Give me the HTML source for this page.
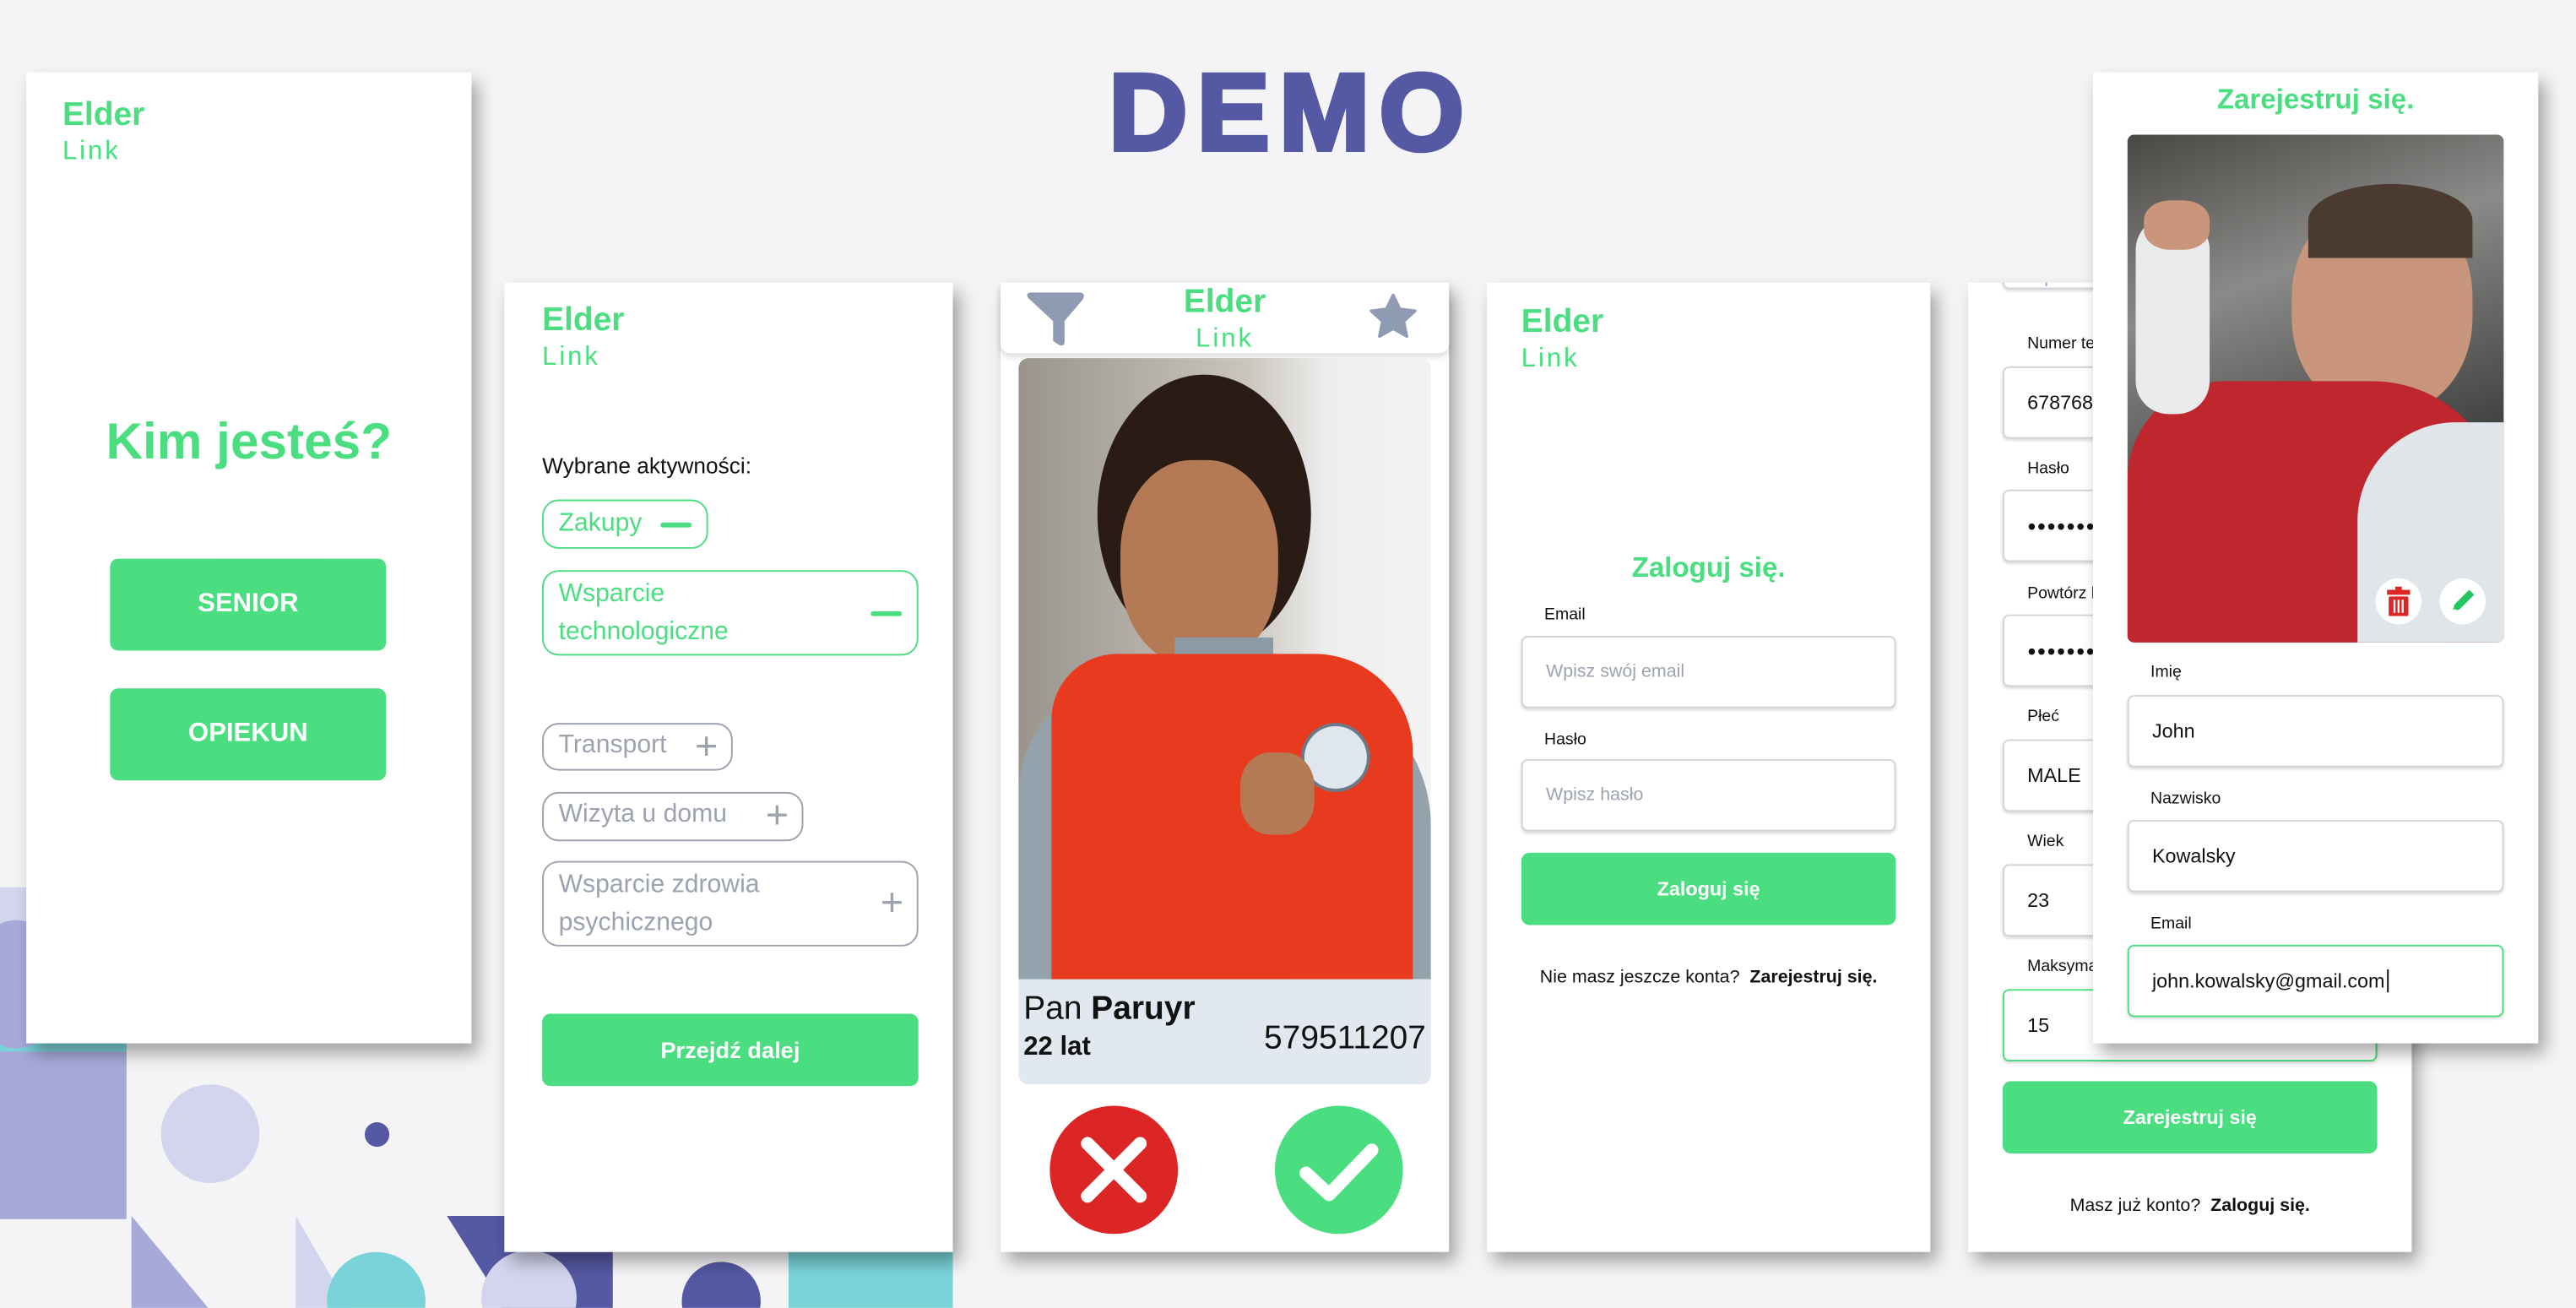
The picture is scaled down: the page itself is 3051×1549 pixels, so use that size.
<!DOCTYPE html>
<html><head><meta charset="utf-8">
<style>
*{margin:0;padding:0;box-sizing:border-box}
html,body{width:3051px;height:1549px;overflow:hidden;background:#f4f4f6}
#w{position:absolute;left:0;top:0;width:1568px;height:796px;transform:scale(1.94579);transform-origin:0 0;font-family:"Liberation Sans",sans-serif;background:#f4f4f6;overflow:hidden}
.a{position:absolute}
.card{position:absolute;background:#fff;box-shadow:4px 6px 10px rgba(0,0,0,.35)}
.g{color:#4ade80}
.el{position:absolute;font-weight:bold;font-size:20px;color:#4ade80;line-height:1}
.lk{position:absolute;font-size:16px;color:#4ade80;letter-spacing:1.5px;line-height:1}
.btn{position:absolute;background:#4ade80;border-radius:5px;color:#fff;font-weight:bold;display:flex;align-items:center;justify-content:center}
.lab{position:absolute;font-size:10px;color:#111}
.inp{position:absolute;border:1.5px solid #d1d5db;border-radius:4px;box-shadow:0 1px 2px rgba(0,0,0,.15);font-size:12px;color:#111;display:flex;align-items:center;padding-left:14px;background:#fff;overflow:hidden;white-space:nowrap}
.chip{position:absolute;border:1.5px solid #9ca3af;border-radius:10px;font-size:15.5px;color:#9ca3af;padding:5px 9px;line-height:23px}
.chip.on{border-color:#4ade80;color:#4ade80}
.ic{position:absolute;right:8px;top:50%;transform:translateY(-50%);font-size:24px;line-height:1}
.mn{position:absolute;right:9px;top:50%;width:19px;height:2.5px;margin-top:-1px;background:#4ade80;border-radius:2px}
.dots{font-size:9px;letter-spacing:0.5px}
</style></head><body><div id="w">

<div class="a" style="left:0;top:540px;width:40px;height:60px;background:#d3d5ee"></div>
<div class="a" style="left:0;top:565px;width:77px;height:77px;background:#7ad3d9"></div>
<div class="a" style="left:-20px;top:560px;width:60px;height:78px;border-radius:50%;background:#a7aad8"></div>
<div class="a" style="left:0;top:640px;width:77px;height:102px;background:#a7aad8"></div>
<div class="a" style="left:98px;top:660px;width:60px;height:60px;border-radius:50%;background:#d3d5ee"></div>
<div class="a" style="left:222px;top:683px;width:15px;height:15px;border-radius:50%;background:#5558a3"></div>
<svg class="a" style="left:0;top:740px" width="600" height="60">
<polygon points="80,0 80,60 130,60" fill="#a7aad8"/>
<polygon points="180,0 180,60 215,60" fill="#d3d5ee"/>
<polygon points="272,0 310,0 310,60" fill="#5558a3"/>
<rect x="305" y="22" width="68" height="40" fill="#5558a3"/>
<circle cx="229" cy="52" r="30" fill="#7ad3d9"/>
<circle cx="322" cy="50" r="29" fill="#d3d5ee"/>
<circle cx="439" cy="52" r="24" fill="#5558a3"/>
<rect x="480" y="22" width="100" height="40" fill="#7ad3d9"/>
</svg>

<div class="a" style="left:586px;top:30px;width:400px;text-align:center;font-size:66px;font-weight:900;color:#5558a3;letter-spacing:6px;line-height:76px;-webkit-text-stroke:3px #5558a3">DEMO</div>

<div class="card" style="left:16px;top:44px;width:271px;height:591px">
 <div class="el" style="left:22px;top:16px">Elder</div>
 <div class="lk" style="left:22px;top:41px">Link</div>
 <div class="a g" style="left:0;width:271px;top:207px;text-align:center;font-size:31px;font-weight:bold">Kim jesteś?</div>
 <div class="btn" style="left:51px;top:296px;width:168px;height:56px;font-size:16px">SENIOR</div>
 <div class="btn" style="left:51px;top:375px;width:168px;height:56px;font-size:16px">OPIEKUN</div>
</div>

<div class="card" style="left:307px;top:172px;width:273px;height:590px">
 <div class="el" style="left:23px;top:13px">Elder</div>
 <div class="lk" style="left:23px;top:38px">Link</div>
 <div class="a" style="left:23px;top:104px;font-size:13.5px;color:#111">Wybrane aktywności:</div>
 <div class="chip on" style="left:23px;top:132px;width:101px;height:30px;padding-top:2px">Zakupy<span class="mn"></span></div>
 <div class="chip on" style="left:23px;top:175px;width:229px;height:52px;padding-top:2px">Wsparcie<br>technologiczne<span class="mn"></span></div>
 <div class="chip" style="left:23px;top:268px;width:116px;height:29px;padding-top:1px">Transport<span class="ic">+</span></div>
 <div class="chip" style="left:23px;top:310px;width:159px;height:30px;padding-top:1px">Wizyta u domu<span class="ic">+</span></div>
 <div class="chip" style="left:23px;top:352px;width:229px;height:52px;padding-top:2px">Wsparcie zdrowia<br>psychicznego<span class="ic">+</span></div>
 <div class="btn" style="left:23px;top:445px;width:229px;height:44px;font-size:14px">Przejdź dalej</div>
</div>

<div class="card" style="left:609px;top:172px;width:273px;height:590px">
 <div class="a" style="left:0;top:0;width:273px;height:43px;background:#fff;border-radius:0 0 6px 6px;box-shadow:0 2px 4px rgba(0,0,0,.15)"></div>
 <svg class="a" style="left:15px;top:5px" width="38" height="34" viewBox="0 0 38 34"><path d="M3,4 Q1,2 4,2 L33,2 Q36,2 34,5 L23,18 L23,31 Q23,33 21,32 L18,30 L18,18 Z" fill="#8e9bb2" stroke="#8e9bb2" stroke-linejoin="round" stroke-width="2"/></svg>
 <div class="el" style="left:0;width:273px;text-align:center;top:2px">Elder</div>
 <div class="lk" style="left:0;width:273px;text-align:center;top:27px">Link</div>
 <svg class="a" style="left:222px;top:4px" width="34" height="34" viewBox="0 0 24 24"><path d="M12 2.5l2.9 6 6.6.8-4.9 4.5 1.3 6.5L12 17l-5.9 3.3 1.3-6.5-4.9-4.5 6.6-.8z" fill="#8e9bb2" stroke="#8e9bb2" stroke-width="1.2" stroke-linejoin="round"/></svg>
 <div class="a" style="left:11px;top:46px;width:251px;height:378px;border-radius:6px 6px 0 0;overflow:hidden;background:linear-gradient(90deg,#9a958c 0%,#c9c4bc 55%,#eeeeee 75%,#f3f3f3 100%)">
  <div class="a" style="left:48px;top:10px;width:130px;height:170px;border-radius:50%;background:#2a1c15"></div>
  <div class="a" style="left:62px;top:62px;width:96px;height:125px;border-radius:45%;background:#b47a55"></div>
  <div class="a" style="left:95px;top:170px;width:60px;height:40px;background:#8c9aa5"></div>
  <div class="a" style="left:0;top:195px;width:251px;height:183px;border-radius:70px 90px 0 0;background:#94a3ab"></div>
  <div class="a" style="left:20px;top:180px;width:220px;height:200px;border-radius:40px 60px 0 0;background:#e83a1f"></div>
  <div class="a" style="left:172px;top:222px;width:42px;height:42px;border-radius:50%;background:#dfe6ee;border:2px solid #6b7a88"></div>
  <div class="a" style="left:135px;top:240px;width:45px;height:50px;border-radius:40%;background:#b47a55"></div>
 </div>
 <div class="a" style="left:11px;top:424px;width:251px;height:64px;background:#e2e8f0;border-radius:0 0 6px 6px"></div>
 <div class="a" style="left:14px;top:431px;font-size:20px;color:#111">Pan <b>Paruyr</b></div>
 <div class="a" style="left:14px;top:457px;font-size:16px;font-weight:bold;color:#111">22 lat</div>
 <div class="a" style="right:14px;top:449px;font-size:20px;color:#111">579511207</div>
 <svg class="a" style="left:29px;top:500px" width="80" height="80"><circle cx="40" cy="40" r="39" fill="#dc2626"/><path d="M24 24L56 56M56 24L24 56" stroke="#fff" stroke-width="8" stroke-linecap="round"/></svg>
 <svg class="a" style="left:166px;top:500px" width="80" height="80"><circle cx="40" cy="40" r="39" fill="#4ade80"/><path d="M20 42L34 55L60 28" stroke="#fff" stroke-width="8" stroke-linecap="round" stroke-linejoin="round" fill="none"/></svg>
</div>

<div class="card" style="left:905px;top:172px;width:270px;height:590px">
 <div class="el" style="left:21px;top:14px">Elder</div>
 <div class="lk" style="left:21px;top:39px">Link</div>
 <div class="a g" style="left:0;width:270px;text-align:center;top:164px;font-size:17px;font-weight:bold">Zaloguj się.</div>
 <div class="lab" style="left:35px;top:197px">Email</div>
 <div class="inp" style="left:21px;top:215px;width:228px;height:44px;color:#9ca3af;font-size:11px">Wpisz swój email</div>
 <div class="lab" style="left:35px;top:273px">Hasło</div>
 <div class="inp" style="left:21px;top:290px;width:228px;height:44px;color:#9ca3af;font-size:11px">Wpisz hasło</div>
 <div class="btn" style="left:21px;top:347px;width:228px;height:44px;font-size:12px">Zaloguj się</div>
 <div class="a" style="left:0;width:270px;text-align:center;top:417px;font-size:11px;color:#111">Nie masz jeszcze konta? &nbsp;<b>Zarejestruj się.</b></div>
</div>

<div class="card" style="left:1198px;top:172px;width:270px;height:590px;overflow:hidden">
 <div class="inp" style="left:21px;top:-40px;width:228px;height:44px;color:#9ca3af;font-size:11px;align-items:flex-end">Wpisz e</div>
 <div class="lab" style="left:36px;top:32px">Numer te</div>
 <div class="inp" style="left:21px;top:51px;width:228px;height:44px">6787687</div>
 <div class="lab" style="left:36px;top:108px">Hasło</div>
 <div class="inp dots" style="left:21px;top:126px;width:228px;height:44px">●●●●●●●●●●</div>
 <div class="lab" style="left:36px;top:184px">Powtórz h</div>
 <div class="inp dots" style="left:21px;top:202px;width:228px;height:44px">●●●●●●●●●●</div>
 <div class="lab" style="left:36px;top:259px">Płeć</div>
 <div class="inp" style="left:21px;top:278px;width:228px;height:44px">MALE</div>
 <div class="lab" style="left:36px;top:335px">Wiek</div>
 <div class="inp" style="left:21px;top:354px;width:228px;height:44px">23</div>
 <div class="lab" style="left:36px;top:411px">Maksyma</div>
 <div class="inp" style="left:21px;top:430px;width:228px;height:44px;border-color:#4ade80">15</div>
 <div class="btn" style="left:21px;top:486px;width:228px;height:44px;font-size:12px">Zarejestruj się</div>
 <div class="a" style="left:0;width:270px;text-align:center;top:556px;font-size:11px;color:#111">Masz już konto? &nbsp;<b>Zaloguj się.</b></div>
</div>

<div class="card" style="left:1274px;top:44px;width:271px;height:591px;overflow:hidden">
 <div class="a g" style="left:0;width:271px;text-align:center;top:7px;font-size:17px;font-weight:bold">Zarejestruj się.</div>
 <div class="a" style="left:21px;top:38px;width:229px;height:309px;border-radius:4px;overflow:hidden;background:linear-gradient(160deg,#4a4845 0%,#8a8a88 30%,#3a3a3a 70%,#222 100%)">
  <div class="a" style="left:100px;top:40px;width:110px;height:130px;border-radius:45%;background:#c9967c"></div>
  <div class="a" style="left:110px;top:30px;width:100px;height:45px;border-radius:50% 50% 0 0;background:#4a3a30"></div>
  <div class="a" style="left:0;top:150px;width:229px;height:170px;border-radius:60px 80px 0 0;background:#c0262d"></div>
  <div class="a" style="left:140px;top:175px;width:100px;height:140px;border-radius:60px 0 0 0;background:#dfe5e8"></div>
  <div class="a" style="left:5px;top:50px;width:45px;height:120px;border-radius:20px;background:#e8eaec"></div>
  <div class="a" style="left:10px;top:40px;width:40px;height:30px;border-radius:40%;background:#c9967c"></div>
  <div class="a" style="left:151px;top:270px;width:28px;height:28px;border-radius:50%;background:#fff"></div>
  <div class="a" style="left:190px;top:270px;width:28px;height:28px;border-radius:50%;background:#fff"></div>
  <svg class="a" style="left:156px;top:275px" width="18" height="18" viewBox="0 0 18 18"><rect x="2" y="2" width="14" height="3" fill="#dc2626"/><rect x="7" y="0" width="4" height="2" fill="#dc2626"/><rect x="3" y="6" width="12" height="12" rx="1" fill="#dc2626"/><path d="M6.5 8v8M9 8v8M11.5 8v8" stroke="#fff" stroke-width="1.2"/></svg>
  <svg class="a" style="left:195px;top:275px" width="18" height="18" viewBox="0 0 18 18"><path d="M3 15L4 11L13 2L16 5L7 14Z" fill="#22c55e"/><path d="M3 15L5 14" stroke="#fff"/></svg>
 </div>
 <div class="lab" style="left:35px;top:360px">Imię</div>
 <div class="inp" style="left:21px;top:379px;width:229px;height:44px">John</div>
 <div class="lab" style="left:35px;top:437px">Nazwisko</div>
 <div class="inp" style="left:21px;top:455px;width:229px;height:44px">Kowalsky</div>
 <div class="lab" style="left:35px;top:513px">Email</div>
 <div class="inp" style="left:21px;top:531px;width:229px;height:44px;border-color:#4ade80">john.kowalsky@gmail.com<span style="border-left:1px solid #111;height:14px;margin-left:1px"></span></div>
</div>

</div></body></html>
